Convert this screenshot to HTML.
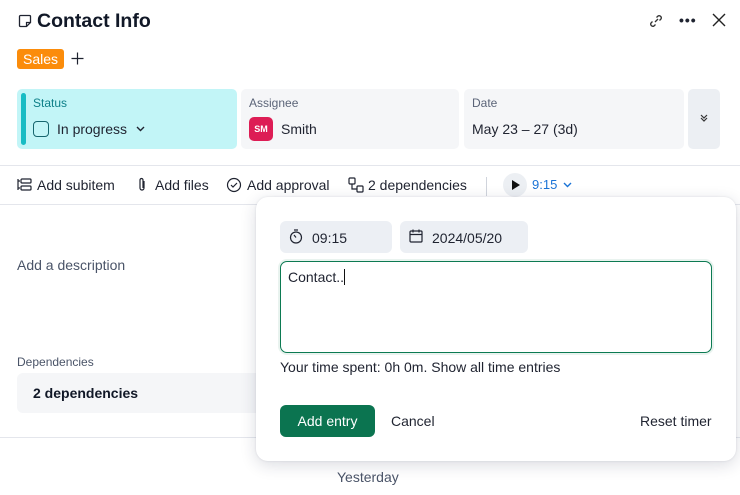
<!DOCTYPE html>
<html><head><meta charset="utf-8"><style>
*{box-sizing:border-box;margin:0;padding:0}
body{width:740px;height:495px;overflow:hidden;background:#fff;font-family:"Liberation Sans",sans-serif;color:#1f2330;position:relative}
.a{position:absolute}
.lbl{font-size:12px;color:#5b6478}
.v{font-size:14px;color:#1f2330}
</style></head><body>
<svg class="a" style="left:18px;top:14px" width="14" height="14" viewBox="0 0 14 14"><path d="M2.5 1.5h9a1 1 0 0 1 1 1v6l-4 4h-6a1 1 0 0 1-1-1v-9a1 1 0 0 1 1-1z" fill="none" stroke="#1f2330" stroke-width="1.3"/><path d="M8.5 12.5v-4h4" fill="none" stroke="#1f2330" stroke-width="1.2"/></svg>
<div class="a" style="left:37px;top:10px;font-size:19.5px;font-weight:bold;color:#111827">Contact Info</div>
<svg class="a" style="left:648px;top:13px" width="16" height="16" viewBox="0 0 16 16" fill="none" stroke="#333" stroke-width="1.3"><path d="M7 9l3-3"/><path d="M8.5 4.5l1.5-1.5a2.2 2.2 0 0 1 3 3l-1.5 1.5"/><path d="M7.5 11.5l-1.5 1.5a2.2 2.2 0 0 1-3-3l1.5-1.5"/></svg>
<div class="a" style="left:679px;top:12px;font-size:14px;font-weight:bold;letter-spacing:1px">•••</div>
<svg class="a" style="left:712px;top:13px" width="14" height="14" viewBox="0 0 14 14" stroke="#222" stroke-width="1.4"><path d="M1 1l12 12M13 1L1 13"/></svg>
<div class="a" style="left:17px;top:49px;width:47px;height:20px;background:#fb8c0b;border-radius:3px;color:#fff;font-size:14px;text-align:center;line-height:20px">Sales</div>
<svg class="a" style="left:71px;top:52px" width="13" height="13" viewBox="0 0 13 13" stroke="#1f2330" stroke-width="1.2"><path d="M6.5 0.5v12M0.5 6.5h12"/></svg>

<div class="a" style="left:17px;top:89px;width:220px;height:60px;background:#c2f5f7;border-radius:5px"></div>
<div class="a" style="left:21px;top:93px;width:5px;height:52px;background:#18bcc4;border-radius:3px"></div>
<div class="a lbl" style="left:33px;top:96px;color:#0d7f88">Status</div>
<div class="a" style="left:33px;top:121px;width:16px;height:16px;border:1.5px solid #16656e;border-radius:4px"></div>
<div class="a v" style="left:57px;top:121px">In progress</div>
<svg class="a" style="left:136px;top:126px" width="9" height="6" viewBox="0 0 9 6"><path d="M1 1l3.5 3.5L8 1" fill="none" stroke="#1f2330" stroke-width="1.4"/></svg>

<div class="a" style="left:241px;top:89px;width:218px;height:60px;background:#f5f6f8;border-radius:5px"></div>
<div class="a lbl" style="left:249px;top:96px">Assignee</div>
<div class="a" style="left:249px;top:117px;width:24px;height:24px;background:#dd1d55;border-radius:5px;color:#fff;font-size:9px;font-weight:bold;text-align:center;line-height:24px">SM</div>
<div class="a v" style="left:281px;top:121px">Smith</div>

<div class="a" style="left:464px;top:89px;width:220px;height:60px;background:#f5f6f8;border-radius:5px"></div>
<div class="a lbl" style="left:472px;top:96px">Date</div>
<div class="a v" style="left:472px;top:121px">May 23 – 27 (3d)</div>
<div class="a" style="left:688px;top:89px;width:32px;height:60px;background:#eceff3;border-radius:5px"></div>
<svg class="a" style="left:699px;top:113px" width="10" height="10" viewBox="0 0 10 10" fill="none" stroke="#333" stroke-width="1.2"><path d="M2 2l3 3 3-3M2 5l3 3 3-3"/></svg>

<div class="a" style="left:0;top:165px;width:740px;height:1px;background:#e4e6ec"></div>
<svg class="a" style="left:17px;top:178px" width="15" height="14" viewBox="0 0 15 14" fill="none" stroke="#1f2330" stroke-width="1.2"><path d="M1 1v11M1 3h2M1 10h2"/><rect x="4" y="1" width="10" height="4" rx="1"/><rect x="4" y="8" width="10" height="4" rx="1"/></svg>
<div class="a v" style="left:37px;top:177px">Add subitem</div>
<svg class="a" style="left:137px;top:177px" width="10" height="15" viewBox="0 0 10 15" fill="none" stroke="#1f2330" stroke-width="1.2"><path d="M7 4v7a2 2 0 0 1-4 0V3a1.5 1.5 0 0 1 3 0v8"/></svg>
<div class="a v" style="left:155px;top:177px">Add files</div>
<svg class="a" style="left:226px;top:177px" width="16" height="16" viewBox="0 0 16 16" fill="none" stroke="#1f2330" stroke-width="1.2"><circle cx="8" cy="8" r="6.5"/><path d="M5 8l2 2 4-4"/></svg>
<div class="a v" style="left:247px;top:177px">Add approval</div>
<svg class="a" style="left:348px;top:177px" width="16" height="16" viewBox="0 0 16 16" fill="none" stroke="#1f2330" stroke-width="1.2"><rect x="1" y="1" width="6" height="6" rx="1"/><rect x="9" y="9" width="6" height="6" rx="1"/><path d="M4 7v5h5"/></svg>
<div class="a v" style="left:368px;top:177px">2 dependencies</div>
<div class="a" style="left:486px;top:177px;width:1px;height:19px;background:#d0d4dc"></div>
<div class="a" style="left:503px;top:173px;width:24px;height:24px;border-radius:50%;background:#eceff3"></div>
<svg class="a" style="left:511px;top:179px" width="10" height="12" viewBox="0 0 10 12"><path d="M1 1l8 5-8 5z" fill="#111"/></svg>
<div class="a" style="left:532px;top:177px;font-size:13px;color:#1a73d6">9:15</div>
<svg class="a" style="left:563px;top:182px" width="9" height="6" viewBox="0 0 9 6"><path d="M1 1l3.5 3.5L8 1" fill="none" stroke="#1a73d6" stroke-width="1.4"/></svg>
<div class="a" style="left:0;top:204px;width:740px;height:1px;background:#e4e6ec"></div>

<div class="a" style="left:17px;top:257px;font-size:14px;color:#4a5468">Add a description</div>
<div class="a lbl" style="left:17px;top:355px;color:#4a5468">Dependencies</div>
<div class="a" style="left:17px;top:373px;width:260px;height:40px;background:#f5f6f8;border-radius:6px"></div>
<div class="a" style="left:33px;top:385px;font-size:14px;font-weight:bold;color:#111827">2 dependencies</div>
<div class="a" style="left:0;top:437px;width:740px;height:1px;background:#e4e6ec"></div>
<div class="a" style="left:337px;top:469px;font-size:14px;color:#4a5468">Yesterday</div>

<div class="a" style="left:256px;top:197px;width:480px;height:264px;background:#fff;border-radius:12px;box-shadow:0 4px 16px rgba(30,40,70,.16),0 0 2px rgba(30,40,70,.12)"></div>
<div class="a" style="left:280px;top:221px;width:112px;height:32px;background:#eceff4;border-radius:6px"></div>
<svg class="a" style="left:289px;top:229px" width="14" height="15" viewBox="0 0 14 15" fill="none" stroke="#1f2330" stroke-width="1.2"><circle cx="7" cy="8.5" r="5.5"/><path d="M5 1h4M7 8.5L5 6"/></svg>
<div class="a v" style="left:312px;top:230px">09:15</div>
<div class="a" style="left:400px;top:221px;width:128px;height:32px;background:#eceff4;border-radius:6px"></div>
<svg class="a" style="left:409px;top:229px" width="14" height="14" viewBox="0 0 14 14" fill="none" stroke="#1f2330" stroke-width="1.2"><rect x="1" y="2" width="12" height="11" rx="1"/><path d="M1 5.5h12M4 0.5v3M10 0.5v3"/></svg>
<div class="a v" style="left:432px;top:230px">2024/05/20</div>
<div class="a" style="left:278px;top:259px;width:436px;height:96px;border-radius:9px;background:#e9f3ef"></div>
<div class="a" style="left:280px;top:261px;width:432px;height:92px;border:1.5px solid #0c7a52;border-radius:7px;background:#fff"></div>
<div class="a v" style="left:288px;top:269px">Contact..<span style="display:inline-block;width:1px;height:16px;background:#111;vertical-align:-3px"></span></div>
<div class="a v" style="left:280px;top:359px">Your time spent: 0h 0m. Show all time entries</div>
<div class="a" style="left:280px;top:405px;width:95px;height:32px;background:#0b7450;border-radius:6px;color:#fff;font-size:14px;text-align:center;line-height:32px">Add entry</div>
<div class="a v" style="left:391px;top:413px">Cancel</div>
<div class="a v" style="left:640px;top:413px">Reset timer</div>
</body></html>
